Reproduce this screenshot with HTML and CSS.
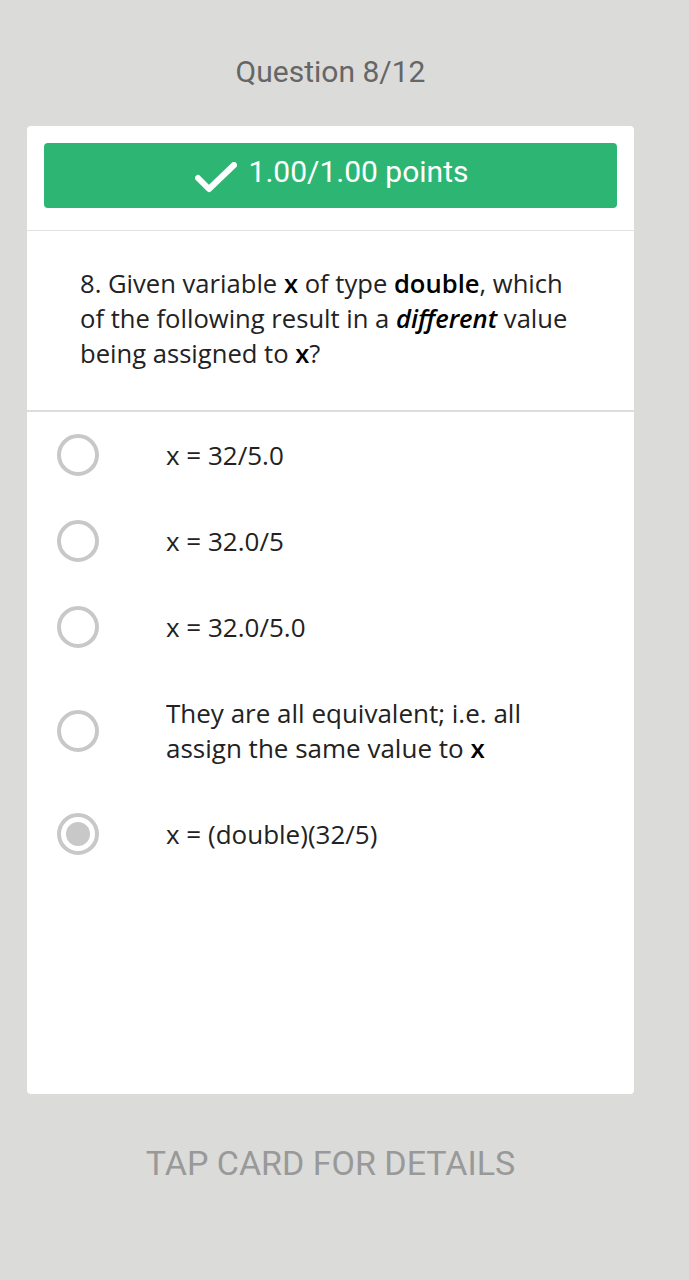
FILE: index.html
```html
<!DOCTYPE html>
<html>
<head>
<meta charset="utf-8">
<link rel="stylesheet" href="styles.css">
</head>
<body>
<div class="page">
  <header class="top">Question 8/12</header>
  <div class="card">
    <div class="banner-wrap">
      <div class="banner">
        <svg class="check" width="42" height="32" viewBox="0 0 42 32"><polyline points="3,16 14,27 39,3" fill="none" stroke="#fff" stroke-width="6" stroke-linecap="round" stroke-linejoin="round"/></svg>
        <span class="points">1.00/1.00 points</span>
      </div>
    </div>
    <div class="question">8. Given variable <b>x</b> of type <b>double</b>, which of the following result in a <b><i>different</i></b> value being assigned to <b>x</b>?</div>
    <ul class="options">
      <li class="opt"><span class="radio"></span><span class="label">x = 32/5.0</span></li>
      <li class="opt"><span class="radio"></span><span class="label">x = 32.0/5</span></li>
      <li class="opt"><span class="radio"></span><span class="label">x = 32.0/5.0</span></li>
      <li class="opt"><span class="radio"></span><span class="label">They are all equivalent; i.e. all assign the same value to <b>x</b></span></li>
      <li class="opt"><span class="radio checked"></span><span class="label">x = (double)(32/5)</span></li>
    </ul>
  </div>
  <footer class="foot">TAP CARD FOR DETAILS</footer>
</div>
</body>
</html>
```
FILE: styles.css
```css
html, body {
  margin: 0;
  padding: 0;
  background: #dbdbda;
}
.page {
  width: 607px;
  margin-left: 27px;
  display: flex;
  flex-direction: column;
}
.top {
  font-family: Roboto, "Liberation Sans", sans-serif;
  font-size: 30px;
  color: #666;
  text-align: center;
  height: 126px;
  line-height: 30px;
  padding-top: 57px;
  box-sizing: border-box;
}
.card {
  background: #fff;
  border-radius: 4px;
  height: 968px;
  display: flex;
  flex-direction: column;
}
.banner-wrap {
  padding: 17px 17px 22px;
  border-bottom: 1px solid #e2e2e2;
}
.banner {
  height: 65px;
  background: #2db673;
  border-radius: 4px;
  display: flex;
  align-items: center;
  justify-content: center;
  gap: 12px;
}
.check {
  display: block;
  margin-left: 2px;
  margin-top: 4px;
}
.points {
  font-family: Roboto, "Liberation Sans", sans-serif;
  font-size: 30px;
  line-height: 30px;
  color: #fff;
  margin-top: -7px;
}
.question {
  font-family: "Open Sans", "DejaVu Sans", sans-serif;
  font-size: 25.6px;
  line-height: 35px;
  color: #222;
  padding: 35px 50px 5px 53px;
  height: 181px;
  box-sizing: border-box;
  border-bottom: 2px solid #dddddd;
}
.question b {
  font-weight: 600;
  color: #000;
}
.options {
  list-style: none;
  margin: 0;
  padding: 0;
}
.opt {
  display: flex;
  align-items: center;
  padding: 0 60px 0 30px;
}
.radio {
  flex: none;
  width: 42px;
  height: 42px;
  box-sizing: border-box;
  border: 4px solid #c8c8c8;
  border-radius: 50%;
  display: flex;
  align-items: center;
  justify-content: center;
  margin-right: 67px;
}
.radio.checked::after {
  content: "";
  width: 24px;
  height: 24px;
  border-radius: 50%;
  background: #c8c8c8;
}
.label {
  font-family: "Open Sans", "DejaVu Sans", sans-serif;
  font-size: 26px;
  line-height: 35px;
  color: #222;
  padding: 25.5px 0;
}
.label b {
  font-weight: 600;
  color: #000;
}
.foot {
  font-family: Roboto, "Liberation Sans", sans-serif;
  font-size: 34px;
  color: #999;
  text-align: center;
  padding-top: 49px;
}
```
